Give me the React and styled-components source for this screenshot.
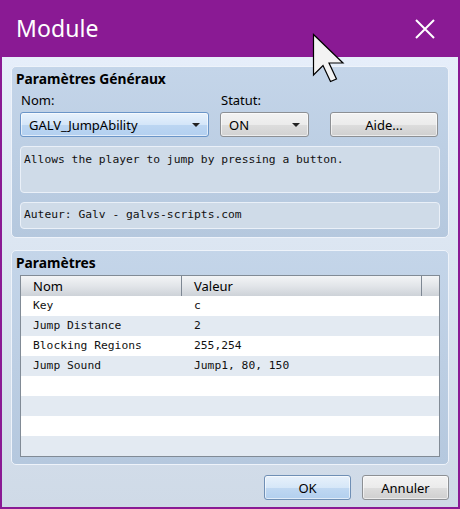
import React from "react";
import styled, { createGlobalStyle } from "styled-components";

const Global = createGlobalStyle`
  html, body { margin: 0; padding: 0; }
  body {
    font-family: "Noto Sans", "Open Sans", sans-serif;
    font-size: 13px;
    color: #000;
  }
  * { box-sizing: border-box; }
`;

const Window = styled.div`
  position: relative;
  width: 460px;
  height: 509px;
  background: #8a1a94;
  padding: 0 2px 2px 2px;
  display: flex;
  flex-direction: column;
  overflow: hidden;
`;

const TitleBar = styled.div`
  height: 57px;
  flex: none;
  display: flex;
  align-items: center;
  justify-content: space-between;
  padding: 0 22px 0 14px;
  color: #fff;
`;

const Title = styled.div`
  font-size: 23px;
  font-weight: 400;
  letter-spacing: 0.1px;
  margin-top: -1px;
`;

const Body = styled.div`
  flex: 1;
  background: linear-gradient(to bottom, #e6eefa 0%, #dbe5f1 45%, #cfdae7 100%);
  padding: 9px 9px 0 9px;
  display: flex;
  flex-direction: column;
`;

const Group = styled.div`
  border: 1px solid #eef3fa;
  border-radius: 5px;
  background: linear-gradient(to bottom, #c4d5e9 0%, #b5c8de 100%);
  padding: 2px 8px ${p => p.$bottom || 8}px 8px;
  margin-top: ${p => p.$top || 0}px;
  display: flex;
  flex-direction: column;
`;

const GroupTitle = styled.div`
  font-weight: 700;
  font-size: 13.8px;
  line-height: 20px;
  margin-left: -4px;
`;

const Row = styled.div`
  display: flex;
  align-items: flex-end;
`;

const Field = styled.div`
  display: flex;
  flex-direction: column;
  width: ${p => p.$w}px;
  margin-right: ${p => p.$gap || 0}px;
`;

const Label = styled.div`
  line-height: 19px;
  padding-left: 1px;
  margin-top: 2px;
  margin-bottom: 2px;
`;

const Combo = styled.div`
  height: 25px;
  border: 1px solid ${p => (p.$focus ? "#6a95c8" : "#8d9094")};
  border-radius: 3px;
  background: ${p =>
    p.$focus
      ? "linear-gradient(to bottom, #e8f2fc 0%, #d4e6f9 50%, #bcd6f2 51%, #b3d0f0 100%)"
      : "linear-gradient(to bottom, #f3f3f3 0%, #ebebeb 50%, #dddddd 51%, #d2d2d2 100%)"};
  display: flex;
  align-items: center;
  justify-content: space-between;
  padding: 0 8px 0 8px;
  box-shadow: inset 0 0 0 1px rgba(255, 255, 255, 0.6);
`;

const Arrow = styled.span`
  width: 0;
  height: 0;
  border-left: 4px solid transparent;
  border-right: 4px solid transparent;
  border-top: 4px solid #222;
  margin-top: 1px;
`;

const Button = styled.div`
  width: ${p => p.$w || 87}px;
  height: 25px;
  border: 1px solid ${p => (p.$primary ? "#6f8fb5" : "#8d9094")};
  border-radius: 3px;
  background: ${p =>
    p.$primary
      ? "linear-gradient(to bottom, #e7f1fb 0%, #d6e7f8 50%, #c0d8f2 51%, #b2cfee 100%)"
      : "linear-gradient(to bottom, #f3f3f3 0%, #ebebeb 50%, #dddddd 51%, #cfcfcf 100%)"};
  box-shadow: inset 0 0 0 1px rgba(255, 255, 255, 0.6);
  display: flex;
  align-items: center;
  justify-content: center;
  margin-left: ${p => p.$left || 0}px;
`;

const InfoBox = styled.div`
  height: ${p => p.$h}px;
  margin-top: 9px;
  border: 1px solid #eaf0f8;
  border-radius: 4px;
  background: #cfdbe8;
  padding: ${p => p.$pt}px 3px 0 3px;
  font-family: "DejaVu Sans Mono", "Liberation Mono", monospace;
  font-size: 11.3px;
  line-height: 16px;
  color: #111;
`;

const List = styled.div`
  margin-top: 2px;
  border: 1px solid #818b96;
  background: #fff;
  display: flex;
  flex-direction: column;
`;

const HeaderRow = styled.div`
  display: grid;
  grid-template-columns: 160px 1fr 18px;
  height: 20px;
  background: linear-gradient(to bottom, #f3f4f6 0%, #e2e5e9 50%, #cdd2d8 100%);
`;

const HeadCell = styled.div`
  padding-left: 12px;
  line-height: 20px;
  border-left: ${p => (p.$first ? "none" : "1px solid #7d8793")};
  font-size: 13px;
`;

const DataRow = styled.div`
  display: grid;
  grid-template-columns: 160px 1fr;
  height: 20px;
  background: ${p => (p.$alt ? "#e3eaf2" : "#ffffff")};
  font-family: "DejaVu Sans Mono", "Liberation Mono", monospace;
  font-size: 11.3px;
  line-height: 20px;
  color: #111;
`;

const Cell = styled.div`
  padding-left: ${p => (p.$second ? 13 : 12)}px;
  white-space: nowrap;
`;

const Footer = styled.div`
  display: flex;
  justify-content: flex-end;
  margin-top: 10px;
`;

const Cursor = styled.svg`
  position: absolute;
  left: 312px;
  top: 33px;
`;

const CloseIcon = () => (
  <svg width="22" height="22" viewBox="0 0 22 22">
    <path d="M2 2 L20 20 M20 2 L2 20" stroke="#fff" strokeWidth="2" fill="none" />
  </svg>
);

const params = [
  ["Key", "c"],
  ["Jump Distance", "2"],
  ["Blocking Regions", "255,254"],
  ["Jump Sound", "Jump1, 80, 150"],
  ["", ""],
  ["", ""],
  ["", ""],
  ["", ""],
];

export default function App() {
  return (
    <>
      <Global />
      <Window>
        <TitleBar>
          <Title>Module</Title>
          <CloseIcon />
        </TitleBar>
        <Body>
          <Group>
            <GroupTitle>Paramètres Généraux</GroupTitle>
            <Row>
              <Field $w={189} $gap={11}>
                <Label>Nom:</Label>
                <Combo $focus>
                  <span>GALV_JumpAbility</span>
                  <Arrow />
                </Combo>
              </Field>
              <Field $w={89} $gap={21}>
                <Label>Statut:</Label>
                <Combo>
                  <span>ON</span>
                  <Arrow />
                </Combo>
              </Field>
              <Button $w={108}>Aide...</Button>
            </Row>
            <InfoBox $h={47} $pt={5}>
              Allows the player to jump by pressing a button.
            </InfoBox>
            <InfoBox $h={27} $pt={4}>
              Auteur: Galv - galvs-scripts.com
            </InfoBox>
          </Group>
          <Group $top={12} $bottom={7}>
            <GroupTitle>Paramètres</GroupTitle>
            <List>
              <HeaderRow>
                <HeadCell $first>Nom</HeadCell>
                <HeadCell>Valeur</HeadCell>
                <HeadCell />
              </HeaderRow>
              {params.map(([k, v], i) => (
                <DataRow key={i} $alt={i % 2 === 1}>
                  <Cell>{k}</Cell>
                  <Cell $second>{v}</Cell>
                </DataRow>
              ))}
            </List>
          </Group>
          <Footer>
            <Button $primary>OK</Button>
            <Button $left={11}>Annuler</Button>
          </Footer>
        </Body>
        <Cursor width="34" height="52" viewBox="0 0 34 52">
          <path
            d="M1.5 1.5 L1.5 42 L11 32.5 L18.5 48.5 L24.5 46 L17 30 L31 30 Z"
            fill="#f3f3f3"
            stroke="#000"
            strokeWidth="1.2"
            strokeLinejoin="miter"
          />
        </Cursor>
      </Window>
    </>
  );
}
